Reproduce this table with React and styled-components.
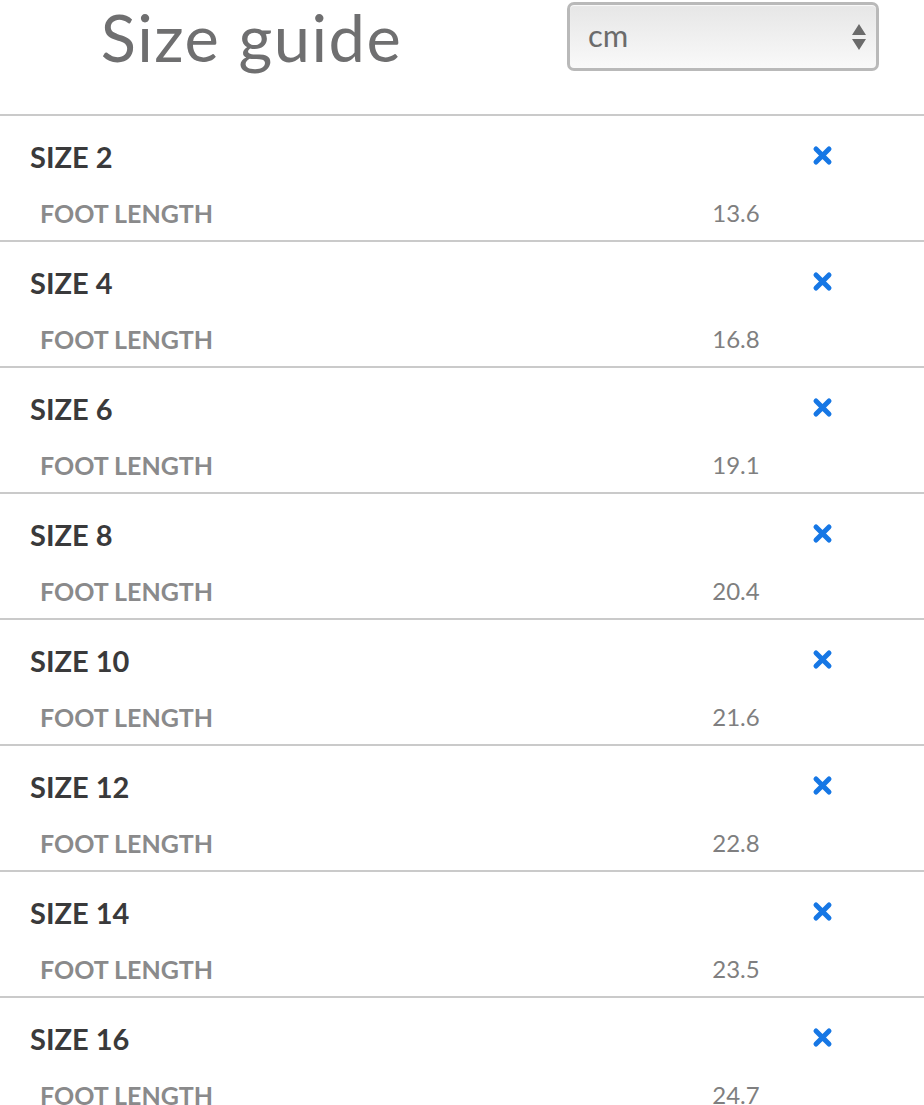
import React from 'react';
import styled, { createGlobalStyle } from 'styled-components';

const GlobalStyle = createGlobalStyle`
  html, body {
    margin: 0;
    padding: 0;
    background: #fff;
    font-family: Lato, "Open Sans", sans-serif;
  }
`;

const Page = styled.div`
  width: 924px;
`;

const Header = styled.div`
  display: grid;
  grid-template-columns: 503px 1fr;
  align-items: start;
  height: 114px;
  border-bottom: 2px solid #cacaca;
`;

const Title = styled.h1`
  margin: 0;
  padding-top: 5px;
  text-align: center;
  font-size: 65px;
  line-height: 65px;
  font-weight: 400;
  color: #6f6f70;
  letter-spacing: 1.5px;
`;

const SelectBox = styled.div`
  box-sizing: border-box;
  margin: 2px 0 0 64px;
  width: 312px;
  height: 69px;
  border: 3px solid #b9b9b9;
  border-radius: 7px;
  background: linear-gradient(#e6e6e6, #f9f9f9);
  box-shadow: inset 0 1px 1px rgba(255,255,255,0.8);
  display: flex;
  align-items: center;
  justify-content: space-between;
  padding: 0 10px 4px 18px;
  font-size: 31px;
  color: #6b6b6b;
`;

const Arrows = styled.svg`
  width: 14px;
  height: 26px;
  margin-top: 4px;
`;

const Row = styled.div`
  box-sizing: border-box;
  height: 126px;
  border-bottom: 2px solid #cacaca;
  padding: 0 0 0 30px;
  display: grid;
  grid-template-columns: 1fr 60px;
  grid-template-rows: 79px 1fr;
`;

const SizeLabel = styled.div`
  align-self: center;
  padding-top: 2px;
  font-size: 29px;
  font-weight: 700;
  color: #3a3a3b;
`;

const Close = styled.svg`
  align-self: center;
  justify-self: end;
  width: 19px;
  height: 19px;
  margin-right: 92px;
  grid-column: 2;
  grid-row: 1;
  overflow: visible;
`;

const Measure = styled.div`
  grid-column: 1 / 3;
  display: grid;
  grid-template-columns: 1fr 120px;
  padding: 4px 128px 0 10px;
  align-items: start;
`;

const MeasureName = styled.div`
  font-size: 25px;
  font-weight: 700;
  color: #8a8a8b;
  line-height: 28px;
`;

const MeasureValue = styled.div`
  text-align: center;
  font-size: 24px;
  color: #7f7f80;
  line-height: 28px;
`;

const sizes = [
  ['2', '13.6'],
  ['4', '16.8'],
  ['6', '19.1'],
  ['8', '20.4'],
  ['10', '21.6'],
  ['12', '22.8'],
  ['14', '23.5'],
  ['16', '24.7'],
];

const App = () => (
  <Page>
    <GlobalStyle />
    <Header>
      <Title>Size guide</Title>
      <SelectBox>
        <span>cm</span>
        <Arrows viewBox="0 0 14 26">
          <path d="M7 0 L14 11 L0 11 Z M0 15 L14 15 L7 26 Z" fill="#6b6b6b" />
        </Arrows>
      </SelectBox>
    </Header>
    {sizes.map(([size, length]) => (
      <Row key={size}>
        <SizeLabel>SIZE {size}</SizeLabel>
        <Close viewBox="0 0 19 19">
          <path d="M3 3 L16 16 M16 3 L3 16" stroke="#1677e5" strokeWidth="5" strokeLinecap="round" />
        </Close>
        <Measure>
          <MeasureName>FOOT LENGTH</MeasureName>
          <MeasureValue>{length}</MeasureValue>
        </Measure>
      </Row>
    ))}
  </Page>
);

export default App;
